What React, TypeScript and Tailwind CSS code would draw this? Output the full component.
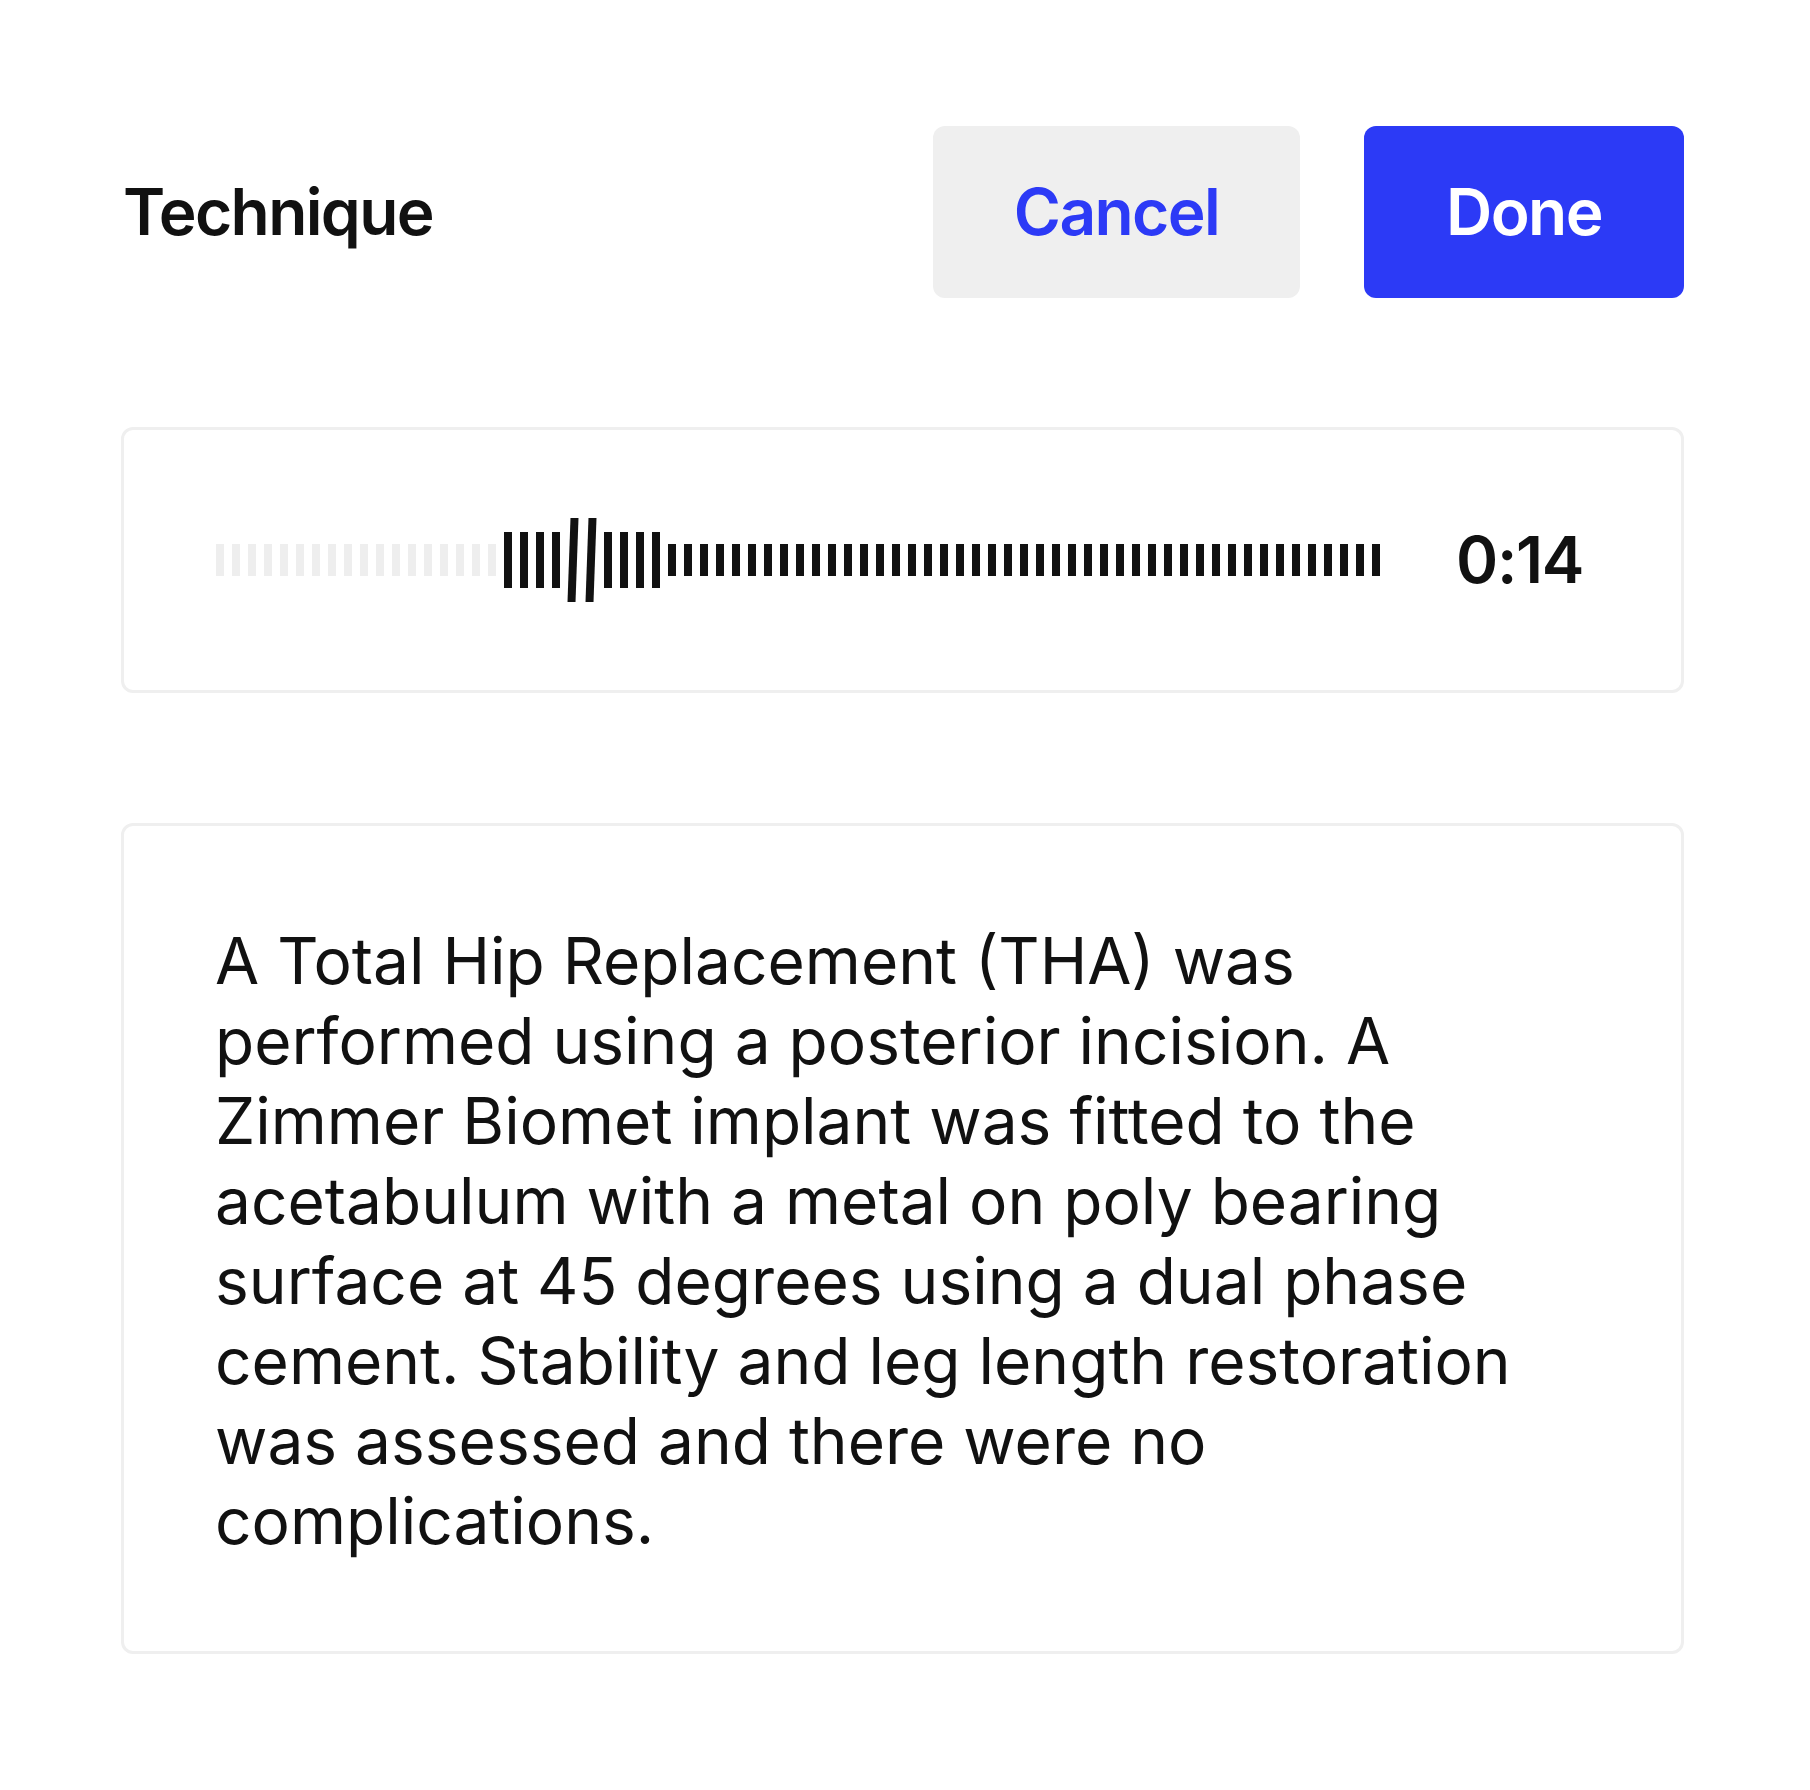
import React from 'react'

const LIGHT_BARS = 18
const SHORT_BARS = 45

function Waveform() {
  const bars: React.ReactNode[] = []

  // played-out part, pale
  for (let i = 0; i < LIGHT_BARS; i++) {
    bars.push(<rect key={`l${i}`} x={i * 16} y={26} width={8} height={32} fill="#eeeeee" />)
  }

  // loud section around the playhead
  const tall = [288, 304, 320, 336, 388, 404, 420, 436]
  tall.forEach((x, i) => {
    bars.push(<rect key={`t${i}`} x={x} y={14} width={8} height={56} fill="#111111" />)
  })

  // two leaning peaks
  ;[353, 371].forEach((x, i) => {
    bars.push(
      <polygon
        key={`s${i}`}
        points={`${x + 1.5},0 ${x + 9.5},0 ${x + 6.5},84 ${x - 1.5},84`}
        fill="#111111"
      />
    )
  })

  for (let i = 0; i < SHORT_BARS; i++) {
    bars.push(<rect key={`d${i}`} x={452 + i * 16} y={26} width={8} height={32} fill="#111111" />)
  }

  return (
    <svg width={1164} height={84} viewBox="0 0 1164 84" className="shrink-0">
      {bars}
    </svg>
  )
}

export default function App() {
  return (
    <div className="min-h-screen bg-white pt-[126px] pl-[121px] pr-[126px] pb-[137px] font-['Inter',sans-serif] text-[#111111]">
      <div className="flex h-[172px] items-center justify-between">
        <h1 className="pl-[2px] text-[64px] font-semibold tracking-[-0.025em]">Technique</h1>
        <div className="flex h-full gap-16">
          <button className="h-full w-[367px] rounded-xl bg-[#efefef] text-[64px] font-semibold tracking-[-0.025em] text-[#2c3af6]">
            Cancel
          </button>
          <button className="h-full w-[320px] rounded-xl bg-[#2c3af6] text-[64px] font-semibold tracking-[-0.025em] text-white">
            Done
          </button>
        </div>
      </div>

      <div className="mt-[129px] flex h-[266px] items-center rounded-xl border-[3px] border-[#efefef] pl-[92px]">
        <Waveform />
        <span className="ml-[76px] text-[64px] font-semibold tracking-[-0.02em]">0:14</span>
      </div>

      <div className="mt-[130px] rounded-xl border-[3px] border-[#efefef] pl-[91px] pr-[93px] pt-[95px] pb-[90px]">
        <p className="max-w-[1370px] text-[64px] leading-[80px]">
          A Total Hip Replacement (THA) was performed using a posterior incision. A Zimmer Biomet
          implant was fitted to the acetabulum with a metal on poly bearing surface at 45 degrees
          using a dual phase cement. Stability and leg length restoration was assessed and there
          were no complications.
        </p>
      </div>
    </div>
  )
}
